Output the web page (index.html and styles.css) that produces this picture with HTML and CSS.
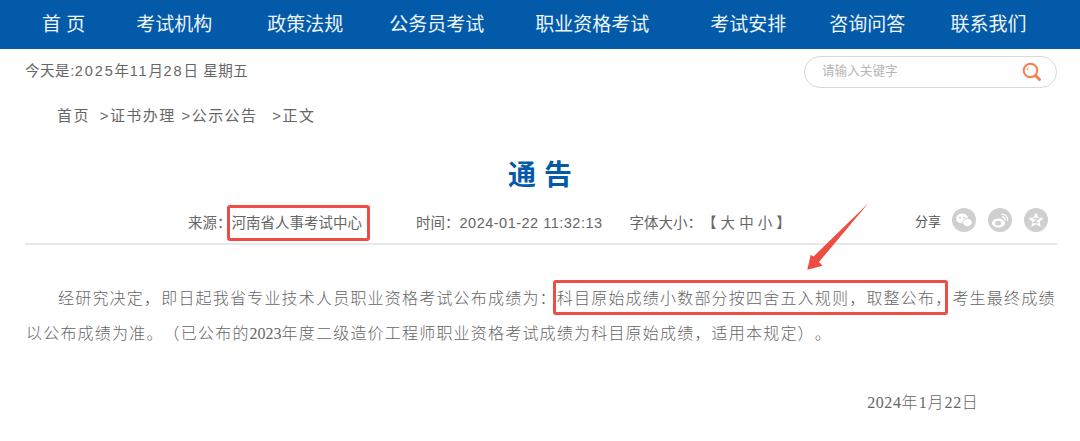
FILE: index.html
```html
<!DOCTYPE html>
<html lang="zh-CN">
<head>
<meta charset="utf-8">
<title>通告</title>
<link rel="stylesheet" href="styles.css">
</head>
<body>
<nav class="nav">
  <a class="nav-item home">首 页</a>
  <a class="nav-item org">考试机构</a>
  <a class="nav-item policy">政策法规</a>
  <a class="nav-item civil">公务员考试</a>
  <a class="nav-item cert">职业资格考试</a>
  <a class="nav-item plan">考试安排</a>
  <a class="nav-item ask">咨询问答</a>
  <a class="nav-item contact">联系我们</a>
</nav>
<div class="topbar">
  <div class="today">今天是:<span class="digits">2025</span>年<span class="digits">11</span>月<span class="digits">28</span>日 星期五</div>
  <div class="search">
    <span class="search-hint">请输入关键字</span>
    <svg class="search-icon" viewBox="0 0 20 20" width="20" height="20"><circle cx="8.500" cy="8.500" r="6.800" fill="none" stroke="#f57f4f" stroke-width="2"/><path d="M5 8.500a3.500 3.500 0 0 1 1.600-3" fill="none" stroke="#f57f4f" stroke-width="1"/><path d="M13.500 13.500l4 4" stroke="#f57f4f" stroke-width="3" stroke-linecap="round"/></svg>
  </div>
</div>
<div class="crumbs"><span>首页</span><span class="c1">&gt;证书办理</span><span class="c2">&gt;公示公告</span><span class="c3">&gt;正文</span></div>
<h1 class="title">通 告</h1>
<div class="meta">
  <span class="source-label">来源：</span>
  <span class="source boxed">河南省人事考试中心</span>
  <span class="time">时间：<span class="stamp">2024-01-22 11:32:13</span></span>
  <span class="size">字体大小：【 大 中 小 】</span>
  <div class="share">
    <span class="share-label">分享</span>
    <svg class="share-icon" viewBox="0 0 24 24"><circle cx="12" cy="12" r="12" fill="#cfcfcf"/><ellipse cx="10" cy="10.500" rx="6" ry="5" fill="#fff"/><ellipse cx="15.500" cy="14.500" rx="4.800" ry="4" fill="#fff" stroke="#cfcfcf"/><circle cx="8" cy="9.500" r=".9" fill="#cfcfcf"/><circle cx="12" cy="9.500" r=".9" fill="#cfcfcf"/></svg>
    <svg class="share-icon" viewBox="0 0 24 24"><circle cx="12" cy="12" r="12" fill="#cfcfcf"/><ellipse cx="10.500" cy="15" rx="6.500" ry="4.600" fill="#fff"/><ellipse cx="10" cy="15.200" rx="3" ry="2.400" fill="#cfcfcf"/><path d="M14 6.500a5 5 0 0 1 5.500 6M14.500 9a2.300 2.300 0 0 1 2.500 2.800" fill="none" stroke="#fff" stroke-width="1.300" stroke-linecap="round"/></svg>
    <svg class="share-icon" viewBox="0 0 24 24"><circle cx="12" cy="12" r="12" fill="#cfcfcf"/><path d="M12 4.500l2.300 5 5.400.6-4 3.600 1.100 5.300-4.800-2.700-4.800 2.700 1.100-5.300-4-3.600 5.400-.6z" fill="#fff"/><path d="M9.500 10.500h5l-5 4h5" fill="none" stroke="#cfcfcf" stroke-width="1.300"/></svg>
  </div>
</div>
<article class="body">
  <p class="para">经研究决定，即日起我省专业技术人员职业资格考试公布成绩为：<span class="boxed rule">科目原始成绩小数部分按四舍五入规则，取整公布，</span>考生最终成绩以公布成绩为准。（已公布的<span class="num">2023</span>年度二级造价工程师职业资格考试成绩为科目原始成绩，适用本规定）。</p>
  <p class="date"><span class="num">2024</span>年<span class="num">1</span>月<span class="num">22</span>日</p>
</article>
<svg class="arrow" viewBox="0 0 80 80" width="80" height="80"><path d="M68.500 5L19 64 22.700 67.700 7.300 71.700 10.700 56.700 13.500 58.500z" fill="#ef4d43"/></svg>
</body>
</html>
```
FILE: styles.css
```css
* { box-sizing: border-box; }
html, body { margin: 0; padding: 0; }
body {
  position: relative;
  width: 1080px;
  height: 441px;
  overflow: hidden;
  background: #fff;
  color: #666;
  font-family: "Liberation Sans", "Noto Sans CJK SC", sans-serif;
  text-spacing-trim: space-all;
  text-autospace: no-autospace;
}
.nav {
  display: flex;
  align-items: center;
  height: 49px;
  padding-top: 1px;
  background: #035aa8;
  color: #eef5fb;
  font-size: 19px;
  white-space: nowrap;
}
.nav-item { display: block; line-height: 48px; }
.home { margin-left: 42px; }
.org { margin-left: 51px; }
.policy { margin-left: 55px; }
.civil { margin-left: 46px; }
.cert { margin-left: 51px; }
.plan { margin-left: 61px; }
.ask { margin-left: 43px; }
.contact { margin-left: 45px; }

.topbar {
  display: flex;
  justify-content: space-between;
  align-items: flex-start;
  height: 57px;
  padding: 7px 23px 0 25px;
}
.today {
  margin-top: 5px;
  font-size: 14.500px;
  line-height: 20px;
  letter-spacing: .55px;
  color: #666;
}
.digits { letter-spacing: 1.900px; }
.search {
  display: flex;
  align-items: center;
  justify-content: space-between;
  width: 253px;
  height: 32px;
  padding: 0 14px 0 17px;
  border: 1px solid #d8d8d8;
  border-radius: 16px;
}
.search-hint { font-size: 12.600px; line-height: 24px; margin-bottom: 3px; color: #b5b5b5; }
.search-icon { display: block; }

.crumbs {
  display: flex;
  padding-left: 57px;
  font-size: 15px;
  line-height: 20px;
  letter-spacing: 1.400px;
  color: #666;
}
.c1 { margin-left: 10px; }
.c2 { margin-left: 6px; }
.c3 { margin-left: 15px; }

.title {
  margin: 31px 0 0;
  text-align: center;
  font-size: 28px;
  line-height: 38px;
  font-weight: 700;
  color: #035aa8;
}
.meta {
  display: flex;
  align-items: center;
  height: 44px;
  margin: 6px 23px 0 25px;
  padding: 2px 0 0 163px;
  border-bottom: 2px solid #e8e8e8;
  font-size: 14.500px;
  line-height: 20px;
  color: #666;
  white-space: nowrap;
}
.time { margin-left: 54px; }
.stamp { letter-spacing: .5px; }
.size { margin-left: 27px; }
.share {
  display: flex;
  align-items: center;
  gap: 12px;
  margin-left: auto;
  margin-right: 9px;
  margin-bottom: 6px;
}
.share-label { margin: 4px -1px 0 0; font-size: 13px; color: #555; }
.share-icon { display: block; width: 24px; height: 24px; }

.boxed { position: relative; }
.boxed::after {
  content: "";
  position: absolute;
  border: 3px solid #ef4d43;
  border-radius: 3px;
}
.source.boxed::after { left: -5px; right: -8px; top: -8px; bottom: -8px; }
.rule.boxed::after { left: -4px; right: 4px; top: -10px; bottom: -8px; }

.body { padding: 0 23px 0 26px; }
.para {
  margin: 36px 0 0;
  font-family: "Liberation Serif", "Noto Sans CJK SC", serif;
  font-size: 16px;
  font-weight: 300;
  letter-spacing: 1.200px;
  line-height: 35px;
  text-indent: 32px;
  color: #666;
}
.num { letter-spacing: 0; }
.date {
  margin: 35px 0 0;
  padding-right: 78px;
  text-align: right;
  font-family: "Liberation Serif", "Noto Sans CJK SC", serif;
  font-size: 16px;
  font-weight: 300;
  letter-spacing: 1.200px;
  line-height: 34px;
  color: #666;
}
.date .num { letter-spacing: .6px; }
.arrow { position: absolute; left: 800px; top: 198px; }
```
